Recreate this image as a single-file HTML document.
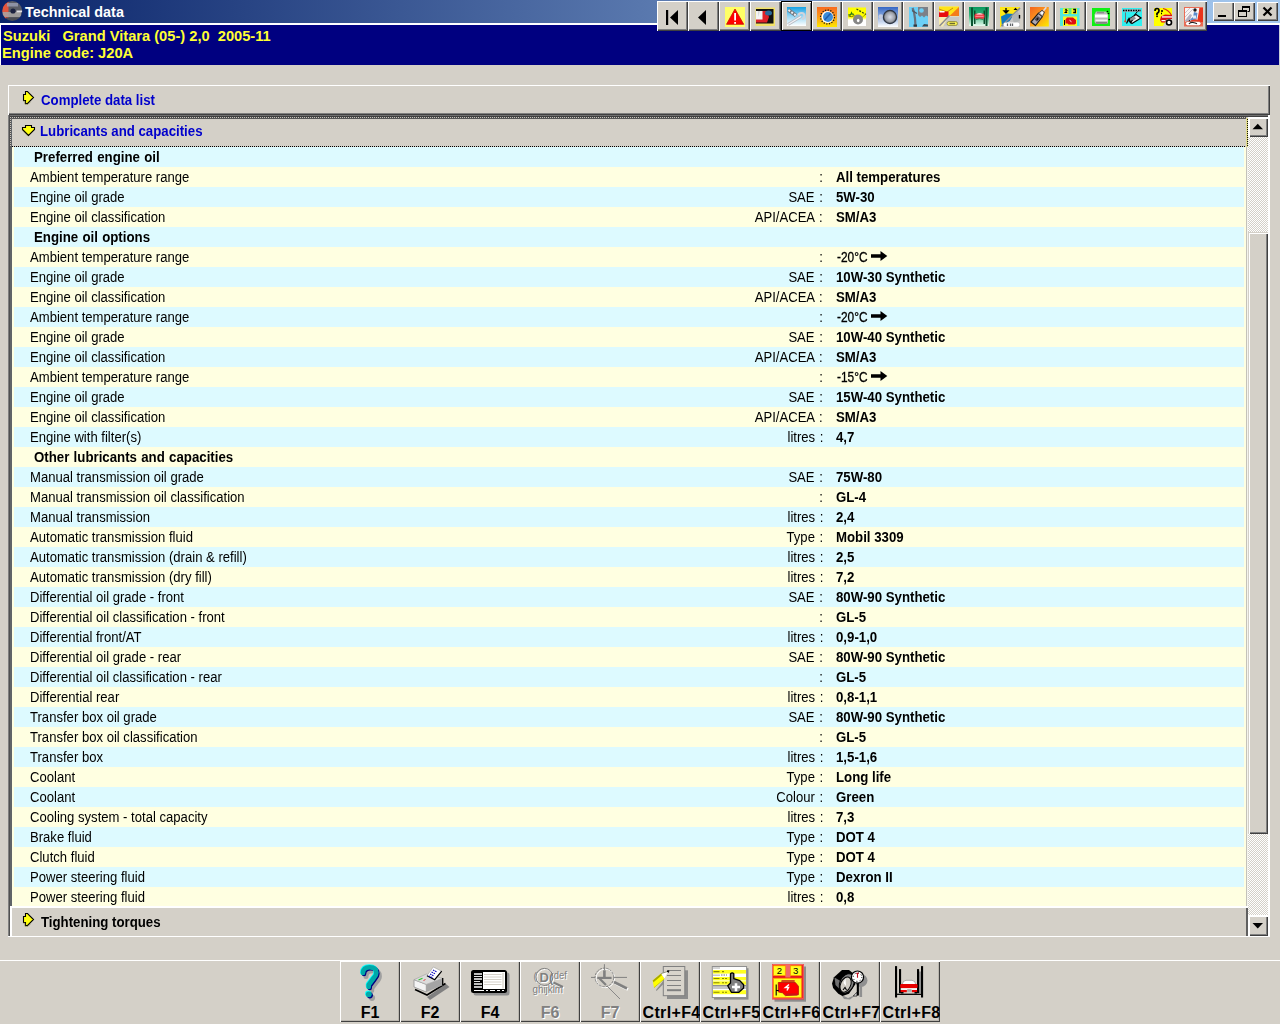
<!DOCTYPE html>
<html lang="en"><head><meta charset="utf-8"><title>Technical data</title>
<style>
*{box-sizing:border-box;margin:0;padding:0}
html,body{width:1280px;height:1024px;overflow:hidden}
body{position:relative;background:#d4d0c8;font-family:"Liberation Sans",sans-serif;font-size:13px;color:#000}
.abs{position:absolute}
#tbar{left:0;top:0;width:1280px;height:23px;background:linear-gradient(90deg,#0a246a 0%,#a6caf0 100%)}
#ttl{left:25px;top:2px;color:#fff;font-weight:bold;font-size:14.4px;line-height:20px;white-space:nowrap}
#wline{left:0;top:23px;width:1280px;height:2px;background:#fff}
#navy{left:1px;top:25px;width:1278px;height:40px;background:#000080}
#nleft{left:0;top:25px;width:1px;height:40px;background:#fff}
#nright{left:1279px;top:25px;width:1px;height:40px;background:#c8ccd8}
.yl{color:#ffff33;font-weight:bold;font-size:14.67px;line-height:18px;white-space:nowrap;left:3px}
.tb{top:1px;height:30px;background:#d4d0c8;box-shadow:inset 1px 1px 0 #fff,inset -1px -1px 0 #404040,inset -2px -2px 0 #808080}
.tb.dn{box-shadow:inset 0 0 0 1px #000,inset 2px 2px 0 #fff,inset -2px -2px 0 #808080}
.tb svg{position:absolute;left:0;top:0}
.wb svg{position:absolute;left:0;top:0}
.wb{top:2px;height:19px;width:21px;background:#d4d0c8;box-shadow:inset 1px 1px 0 #fff,inset -1px -1px 0 #404040,inset -2px -2px 0 #808080}
.sb{background:#d4d0c8;box-shadow:inset 1px 1px 0 #fff,inset 2px 2px 0 #fff,inset -1px -1px 0 #404040,inset -2px -2px 0 #808080}
.raised{background:#d4d0c8;box-shadow:inset 1px 1px 0 #fff,inset 2px 2px 0 #fff,inset -1px -1px 0 #404040,inset -2px -2px 0 #808080}
.hd{font-weight:bold;font-size:14px;line-height:18px;white-space:nowrap;transform:scaleX(.945);transform-origin:0 50%}
.blue{color:#0000cc}
#list{left:12px;top:147px;width:1235px;height:760px;background:#ffffe1;overflow:hidden}
.row{position:relative;height:20px;line-height:20px;margin:0 3px 0 2px;white-space:nowrap}
.row.b{background:#ddfaff}
.row.y{background:#ffffe1}
.row span{position:absolute;top:0;font-size:14px;transform:scaleX(.935);transform-origin:0 50%}
.row .h{left:20px;font-weight:bold;transform:scaleX(.947);word-spacing:.6px}
.l{left:16px}
.row .m{right:421px;text-align:right;transform-origin:100% 50%;word-spacing:1px}
.row .v{left:822px;font-weight:bold;transform:scaleX(.945)}
.row .v.t{left:823px;font-weight:normal;transform:scaleX(.85);-webkit-text-stroke:.3px #000}
.row .ars{left:857px;top:4px;transform:none;line-height:0;font-size:0}
.ar{display:block}
.bb{top:961px;width:60px;height:61px;background:#d4d0c8;box-shadow:inset 1px 1px 0 #fff,inset -1px -1px 0 #404040,inset -2px -2px 0 #bab6ae}
.bb b{position:absolute;left:0;width:60px;text-align:center;top:42px;font-size:16px;line-height:20px;white-space:nowrap}
.bb b.c{text-align:left;left:2.500px;letter-spacing:.36px;overflow:hidden;width:57px}
.bb.dis b{color:#808080;text-shadow:1px 1px 0 #fff}
.bb svg{position:absolute;left:0;top:0}
</style></head><body>
<div id="tbar" class="abs"></div>
<div class="abs" style="left:1.500px;top:.600px"><svg width="24" height="23" viewBox="0 0 24 23"><defs><clipPath id="apc"><circle cx="10.200" cy="10" r="10"/></clipPath><filter id="apb" x="-10%" y="-10%" width="120%" height="120%"><feGaussianBlur stdDeviation=".55"/></filter></defs><g clip-path="url(#apc)" filter="url(#apb)"><rect width="24" height="23" fill="#5a5d66"/><rect x="0" y="0" width="6.500" height="23" fill="#e2553e"/><rect x="5" y="2" width="11" height="3.500" fill="#9aa0b4" opacity=".8"/><rect x="0" y="11" width="19" height="5" fill="#a9a6a3" opacity=".85"/><circle cx="11" cy="10" r="2.600" fill="#1c2440"/><rect x="14.500" y="9.500" width="7" height="1.800" fill="#e0e0e4"/><rect x="4" y="16.500" width="15" height="5" fill="#4a4c52"/></g></svg></div>
<div id="ttl" class="abs">Technical data</div>
<div id="wline" class="abs"></div>
<div id="navy" class="abs"></div><div id="nleft" class="abs"></div><div id="nright" class="abs"></div>
<div class="abs yl" style="top:27px">Suzuki&nbsp;&nbsp; Grand Vitara (05-) 2,0&nbsp; 2005-11</div>
<div class="abs yl" style="top:44px;left:2px">Engine code: J20A</div>

<!-- top toolbar -->
<div class="abs tb" style="left:657px;width:31px"><svg width="31" height="30"><rect x="9" y="9" width="2.200" height="15" fill="#000"/><path d="M13 16.500L21 9v15z" fill="#000"/></svg></div>
<div class="abs tb" style="left:688px;width:31px"><svg width="31" height="30"><path d="M10 16.500L18 9v15z" fill="#000"/></svg></div>
<div class="abs tb" style="left:719px;width:31px"><svg width="31" height="30"><rect x="6" y="6" width="20" height="20" fill="#ffff66"/><path d="M16 8L24.700 23.300H7.500z" fill="#ff0000" stroke="#c81400" stroke-width=".8"/><rect x="15.200" y="12" width="1.800" height="7.500" fill="#fff"/><rect x="15.200" y="21" width="1.800" height="1.800" fill="#fff"/></svg></div>
<div class="abs tb" style="left:750px;width:31px"><svg width="31" height="30"><rect x="5.500" y="6.500" width="19.500" height="18.500" fill="#f2e268"/><rect x="6" y="8" width="17.500" height="14.500" fill="#111"/><path d="M6 10h11l2 6-2 5.500H6z" fill="#e02028"/><rect x="6" y="10" width="6.500" height="8.500" fill="#f4f4f4"/><path d="M8 10h2l-2 6z" fill="#d8d8d8"/><ellipse cx="18.500" cy="12" rx="3.500" ry="2.500" fill="#2a6a9a"/></svg></div>
<div class="abs tb dn" style="left:781px;width:31px"><svg width="31" height="30"><defs><linearGradient id="g5" x1="0" y1="0" x2="0" y2="1"><stop offset="0" stop-color="#14a0e4"/><stop offset=".5" stop-color="#9cd8f4"/><stop offset="1" stop-color="#ffffff"/></linearGradient></defs><rect x="6" y="6" width="19" height="19" fill="url(#g5)"/><path d="M7 23.500L20 15.500" stroke="#b8bcc4" stroke-width="3"/><path d="M7 23.500L20 15.500" stroke="#f4f4f8" stroke-width="1.200"/><path d="M17.500 14.500a3 3 0 1 1 3.500 3.500" fill="none" stroke="#d0d4dc" stroke-width="2"/><path d="M7.500 9L15 14.500" stroke="#707880" stroke-width="3.600"/><path d="M7.500 9L15 14.500" stroke="#f0f0f4" stroke-width="2" stroke-dasharray="2 1.500"/></svg></div>
<div class="abs tb" style="left:812px;width:30px"><svg width="31" height="30"><defs><linearGradient id="g6" x1="0" y1="0" x2="0" y2="1"><stop offset="0" stop-color="#f86a20"/><stop offset=".5" stop-color="#fc9c18"/><stop offset="1" stop-color="#ffe800"/></linearGradient></defs><rect x="5" y="6" width="20" height="20" fill="url(#g6)"/><circle cx="15.500" cy="16" r="6.900" fill="none" stroke="#181818" stroke-width="1.300" stroke-dasharray="1.300 1.400"/><circle cx="15.500" cy="16" r="6" fill="#fff"/><circle cx="16" cy="16" r="5" fill="#3c8cd8"/><path d="M12.500 19l6-6.500" stroke="#1c5cb0" stroke-width="1.500"/></svg></div>
<div class="abs tb" style="left:842px;width:31px"><svg width="31" height="30"><defs><linearGradient id="g7" x1="0" y1="0" x2="0" y2="1"><stop offset="0" stop-color="#ffff00"/><stop offset=".52" stop-color="#ffff00"/><stop offset=".68" stop-color="#ffffff"/><stop offset="1" stop-color="#ffffff"/></linearGradient></defs><rect x="6" y="6.500" width="18" height="18.500" fill="url(#g7)"/><path d="M6.500 13.500q2 1.500 3-1.500 1 2 2.500 1" fill="none" stroke="#2c7c10" stroke-width="1.300"/><path d="M6.500 15q3 1.500 6-.5" fill="none" stroke="#707000" stroke-width="1"/><path d="M14.500 8l9.500 5.500" stroke="#3c4c10" stroke-width="1.300" stroke-dasharray="2 1.200"/><path d="M23.500 13.500l-3.500 3" stroke="#707000" stroke-width="1" stroke-dasharray="1.500 1"/><circle cx="16" cy="18.500" r="5" fill="#868686"/><ellipse cx="16.200" cy="19.500" rx="1.300" ry="1.800" fill="#fff"/></svg></div>
<div class="abs tb" style="left:873px;width:30px"><svg width="31" height="30"><defs><linearGradient id="g8" x1="0" y1="0" x2="0" y2="1"><stop offset="0" stop-color="#3466c4"/><stop offset=".55" stop-color="#9cb8e4"/><stop offset="1" stop-color="#ffffff"/></linearGradient><radialGradient id="g8b"><stop offset="0" stop-color="#d8dce8"/><stop offset=".7" stop-color="#9ca0a8"/><stop offset="1" stop-color="#585c60"/></radialGradient></defs><rect x="5" y="6" width="20" height="20" fill="url(#g8)"/><circle cx="7.800" cy="15.500" r="2.200" fill="#c4cce0"/><circle cx="8" cy="19" r="1.800" fill="#c8d0e4"/><circle cx="17" cy="16" r="6.600" fill="url(#g8b)" stroke="#2c3444" stroke-width="1.200"/></svg></div>
<div class="abs tb" style="left:903px;width:31px"><svg width="31" height="30"><rect x="6" y="6" width="19" height="20" fill="#6ccff6"/><path d="M15 6h10v9.500l-2-1-2 2-2-2-2 1.500-2-2z" fill="#7c8088"/><circle cx="18.500" cy="9.500" r="2.300" fill="#6ccff6"/><path d="M9.500 7l1.500 4 1 6.500 .5 8" fill="none" stroke="#68707c" stroke-width="2.200"/><path d="M9 9.500l5 3" stroke="#505860" stroke-width="1.300"/><rect x="10.500" y="23.500" width="3.500" height="2.200" fill="#303840"/><path d="M19 25.500l2-2.500 4 .5v2z" fill="#404850"/></svg></div>
<div class="abs tb" style="left:934px;width:30px"><svg width="31" height="30"><rect x="5" y="5.500" width="20" height="20" fill="#f8ecb0"/><path d="M5 5.500h20v9H5z" fill="#ffe418"/><path d="M25 6v9h-9.500z" fill="#f47c18"/><path d="M5 8l8 3 6-4" fill="none" stroke="#c88c10" stroke-width="1"/><rect x="5" y="10.500" width="9.500" height="5.500" fill="#e80c10"/><rect x="5.500" y="10" width="5" height="1.500" fill="#fff"/><path d="M14.500 15.500H25v10H9z" fill="#c8c8c4"/><path d="M5.500 25L15.500 14.500" stroke="#8c8c90" stroke-width="1.500"/><rect x="13" y="20.500" width="10.500" height="4" rx="2" fill="#f4ec50" stroke="#8c8838" stroke-width=".8"/><rect x="15.500" y="21.800" width="5.500" height="1.400" fill="#6c6c30"/></svg></div>
<div class="abs tb" style="left:964px;width:31px"><svg width="31" height="30"><defs><linearGradient id="g11" x1="0" y1="0" x2="0" y2="1"><stop offset="0" stop-color="#08985c"/><stop offset=".45" stop-color="#38b47c"/><stop offset="1" stop-color="#e8fcf0"/></linearGradient></defs><rect x="5" y="6" width="20" height="19" fill="url(#g11)"/><rect x="7" y="6.500" width="2" height="18.500" fill="#085430"/><rect x="21.500" y="6.500" width="2" height="18.500" fill="#085430"/><rect x="10" y="9.500" width="1.500" height="13.500" fill="#0c4c2c"/><rect x="19.500" y="9.500" width="1.500" height="13.500" fill="#0c4c2c"/><rect x="10.500" y="12.500" width="10" height="5.500" rx="2" fill="#e83c44"/><path d="M12 13.500q3.500-2.500 7 0z" fill="#fff"/><rect x="11.500" y="14.800" width="8" height="1.200" fill="#f88"/><path d="M12 18.500q3.500-1.500 7 0" stroke="#2c8c54" stroke-width="1" fill="none"/></svg></div>
<div class="abs tb" style="left:995px;width:30px"><svg width="31" height="30"><rect x="5" y="6" width="20" height="20" fill="#ffe818"/><path d="M25 7v19H5.500z" fill="#c4c4c4"/><path d="M6 15.500l6-3 7 .5-4 6.500-8 6z" fill="#1078c0"/><path d="M6.500 25L25 7" stroke="#888c90" stroke-width="1.600"/><path d="M17 15l5-4.500 3 3v6l-6 3z" fill="#b0b4b4"/><path d="M24.500 14v3.500" stroke="#000" stroke-width="1.400"/><rect x="8.500" y="21.500" width="16" height="4.200" rx="2" fill="#fff"/><path d="M12.500 22.500v2.500M15.500 22.500v2.500M17.500 22.500v2.500" stroke="#606468" stroke-width="1.300"/><path d="M11 7v3.500M9 10h4l-2 2z" stroke="#000" stroke-width="1.300" fill="#000"/><path d="M18.500 9h4l-2-2.200z" fill="#000"/></svg></div>
<div class="abs tb" style="left:1025px;width:30px"><svg width="31" height="30"><defs><linearGradient id="g13" x1="0" y1="0" x2=".9" y2="1"><stop offset="0" stop-color="#f4641c"/><stop offset=".5" stop-color="#fc9820"/><stop offset="1" stop-color="#ffe400"/></linearGradient></defs><rect x="5" y="6" width="18.800" height="19.500" fill="url(#g13)"/><path d="M6 21l7.500-8.800 4 3.300L10.500 24.500z" fill="#aca8b4" stroke="#201c18" stroke-width="1.200" stroke-linejoin="round"/><path d="M13.500 12.200l3.500-3 2.500 1.800-2 4.500z" fill="#c8c4cc" stroke="#383430" stroke-width=".8"/><path d="M18.500 9.800l2.800-3.600" stroke="#e0dce0" stroke-width="1.600"/><rect x="16.200" y="11" width="1.800" height="2.200" fill="#fff"/><path d="M9.500 18.500l3.200-3.600 2.500 2-3.200 3.800z" fill="#504c58"/><rect x="11.800" y="17" width="1.400" height="2" fill="#181818"/></svg></div>
<div class="abs tb" style="left:1055px;width:31px"><svg width="31" height="30"><rect x="5" y="7" width="19.500" height="18" fill="#50e8dc"/><rect x="8" y="7" width="14" height="6" fill="#58e880"/><rect x="8" y="7.500" width="5.500" height="5.500" fill="#f8f820"/><rect x="16.500" y="7.500" width="5.500" height="5.500" fill="#f8f820"/><path d="M10 9.500l1-1.200 1 1.200-1.800 2h2" fill="none" stroke="#000" stroke-width="1.100"/><path d="M18.200 8.500h2.200v3h-2.200" fill="none" stroke="#000" stroke-width="1.300"/><rect x="8" y="15.500" width="14" height="9.500" fill="#f8f820"/><path d="M10.500 18.500l1.500-2h6l3 2.500v3.500l-1.500 1h-6l-1-1h-2z" fill="#e00c10"/><path d="M9.500 19v5" stroke="#000" stroke-width="1"/><path d="M14.500 19.200l2 1.600" stroke="#fff" stroke-width="1"/></svg></div>
<div class="abs tb" style="left:1086px;width:31px"><svg width="31" height="30"><rect x="6" y="7" width="18" height="18" fill="#10f014"/><path d="M10 10.500h10l2 3v8l-1 1.500H10l-1.500-2v-7.500z" fill="#b8b8b8"/><rect x="9" y="13.500" width="12.500" height="3" fill="#fff"/><rect x="9.500" y="18.500" width="12" height="2" fill="#f0f0f0"/><rect x="10" y="20.800" width="11" height="2" fill="#808480"/><rect x="11" y="11" width="7" height="1.300" fill="#8c8c8c"/><circle cx="21.500" cy="10.500" r=".8" fill="#000"/><circle cx="22.500" cy="12.500" r=".8" fill="#000"/><circle cx="23.200" cy="18.500" r=".8" fill="#000"/></svg></div>
<div class="abs tb" style="left:1117px;width:31px"><svg width="31" height="30"><rect x="5" y="7" width="20" height="18" fill="#30f0f0"/><rect x="6" y="8" width="18" height="3" fill="#8cb8c0"/><path d="M6 9.500h18" stroke="#000" stroke-width="1.500" stroke-dasharray="1.500 1"/><path d="M11 19l8-5.500 5 3.500-9 5.500z" fill="#f0f0f0" stroke="#000" stroke-width="1.200"/><path d="M11 19l5.500-3.800 2.500 2-5 4z" fill="#8c9094"/><path d="M8.500 11.500v9" stroke="#707478" stroke-width="1"/><path d="M7 21l1.500-3.500 1 4z" fill="#e04830"/><path d="M9.500 22.500l2.500-5 1.500 4 2-2.500" fill="none" stroke="#000" stroke-width="1.200"/><path d="M20.500 10.500l-3 3.500" stroke="#000" stroke-width="1"/></svg></div>
<div class="abs tb" style="left:1148px;width:30px"><svg width="31" height="30"><path d="M6 7h18v9l-6 3-3 6H6z" fill="#ffff00"/><path d="M7 10q0-2.500 2-2.500t2 2.200q0 1.600-2 2.800v1.500" fill="none" stroke="#000" stroke-width="1.700"/><rect x="8.200" y="14.500" width="1.700" height="1.600" fill="#000"/><path d="M13 10h2M13 12.500h1" stroke="#000" stroke-width="1.500"/><path d="M15 7.500q6 1.500 8.500 7" fill="none" stroke="#d83010" stroke-width="1.200"/><path d="M13 15.500l4-2 7 .5v4h-5l-2 3.500h-3.500l-1.500-2.500z" fill="#d81018"/><rect x="14" y="15.300" width="10" height="1.300" fill="#fff"/><rect x="13.500" y="19" width="4" height="1.200" fill="#fff"/><circle cx="21" cy="21.500" r="2.500" fill="#fff" stroke="#000" stroke-width="1.600"/></svg></div>
<div class="abs tb" style="left:1178px;width:29px"><svg width="31" height="30"><rect x="6" y="6" width="19" height="19.500" fill="#ec6c54"/><rect x="7" y="7" width="14.500" height="13.500" fill="#f8f4f4"/><path d="M21.500 7h3.500v14h-6z" fill="#e8341c"/><path d="M7 12l5-5M7 16l8-8M7 20l5-6" stroke="#c8c4cc" stroke-width="1"/><path d="M7 20l5-7 2 1-3 7z" fill="#b4b0c0"/><circle cx="17" cy="9" r="1.700" fill="#181818"/><path d="M16 11l3.500 1-1 6-4.500 2-2-1.500 3-2.500z" fill="#5c8ccc"/><rect x="15" y="14.500" width="3" height="3" fill="#dcecf8"/><path d="M11 19.500l2 1.500" stroke="#000" stroke-width="1.500"/><path d="M13 20l5-1 3 1.500" stroke="#e03c28" stroke-width="1.500" fill="none"/><rect x="7.500" y="20.500" width="15.500" height="4.200" rx="2.100" fill="#fff" stroke="#c84028" stroke-width=".6"/><path d="M11 23q1.500-2 4-1.500t4 1.200" fill="none" stroke="#202020" stroke-width="1.200"/></svg></div>

<!-- window buttons -->
<div class="abs wb" style="left:1213px"><svg width="21" height="19"><rect x="5" y="13" width="8" height="2" fill="#000"/></svg></div>
<div class="abs wb" style="left:1234px"><svg width="21" height="19"><path d="M8.500 8V4.500h7v5H13.500" fill="none" stroke="#000" stroke-width="1"/><rect x="8" y="4" width="8" height="2" fill="#000"/><rect x="4.500" y="8.500" width="8" height="6" fill="none" stroke="#000" stroke-width="1"/><rect x="4" y="8" width="9" height="2" fill="#000"/></svg></div>
<div class="abs wb" style="left:1257px"><svg width="21" height="19"><path d="M6.500 5.500l8 8M14.500 5.500l-8 8" stroke="#000" stroke-width="2.200" fill="none"/></svg></div>

<!-- Complete data list -->
<div class="abs" style="left:8px;top:85px;width:1262px;height:30px;background:#d4d0c8;box-shadow:inset 1px 1px 0 #fff,inset -1px -1px 0 #404040,inset -2px -2px 0 #808080"></div>
<div class="abs" style="left:22px;top:90px"><svg width="14" height="16" viewBox="0 0 14 16"><path d="M1.500 4.500h2v-3h2l6 6-6 6h-2v-3h-2z" fill="#ffff10" stroke="#000" stroke-width="1.100" stroke-linejoin="miter"/><path d="M1 11h2v3.300h3l2.500-2.500" fill="none" stroke="#6c6c20" stroke-width=".5"/></svg></div>
<div class="abs hd blue" style="left:41px;top:91px">Complete data list</div>

<!-- Lubricants frame -->
<div class="abs" id="frame" style="left:8px;top:115px;width:1262px;height:822px;background:#d4d0c8"></div>
<div class="abs" style="left:8px;top:115px;width:1260px;height:1px;background:#707070"></div>
<div class="abs" style="left:8px;top:116px;width:1260px;height:1px;background:#404040"></div>
<div class="abs" style="left:10px;top:118px;width:1238px;height:1px;background:#585858"></div>
<div class="abs" style="left:8px;top:115px;width:1px;height:821px;background:#808080"></div>
<div class="abs" style="left:9px;top:115px;width:1px;height:821px;background:#505050"></div>
<div class="abs" style="left:10px;top:117px;width:2px;height:789px;background:#606468"></div>
<div class="abs" style="left:1268px;top:115px;width:2px;height:822px;background:#fff"></div>
<div class="abs" style="left:8px;top:936px;width:1262px;height:1px;background:#fff"></div>
<div class="abs" style="left:10px;top:117px;width:1237px;height:1px;background:repeating-linear-gradient(90deg,#c8c4bc 0 1px,#505050 1px 2px)"></div>
<div class="abs" style="left:10px;top:117px;width:1px;height:30px;background:repeating-linear-gradient(180deg,#c8c4bc 0 1px,#505050 1px 2px)"></div>
<div class="abs" style="left:12px;top:146px;width:1235px;height:1px;background:repeating-linear-gradient(90deg,#000 0 1px,#d4d0c8 1px 2px)"></div>
<div class="abs" style="left:1246px;top:118px;width:1px;height:29px;background:#e4dc90"></div>
<div class="abs" style="left:1247px;top:118px;width:1px;height:29px;background:repeating-linear-gradient(180deg,#d8d490 0 1px,#181800 1px 2px)"></div>
<div class="abs" style="left:21px;top:124px"><svg width="16" height="14" viewBox="0 0 16 14"><path d="M4.500 1.500h6v2h3v2l-6 6-6-6v-2h3z" fill="#ffff10" stroke="#000" stroke-width="1.100" stroke-linejoin="miter"/><path d="M1 6l6 6.200" fill="none" stroke="#6c6c20" stroke-width=".5"/></svg></div>
<div class="abs hd blue" style="left:40px;top:122px">Lubricants and capacities</div>

<div class="abs" id="list">
<div class="row b"><span class="h">Preferred engine oil</span></div>
<div class="row y"><span class="l">Ambient temperature range</span><span class="m">:</span><span class="v">All temperatures</span></div>
<div class="row b"><span class="l">Engine oil grade</span><span class="m">SAE :</span><span class="v">5W-30</span></div>
<div class="row y"><span class="l">Engine oil classification</span><span class="m">API/ACEA :</span><span class="v">SM/A3</span></div>
<div class="row b"><span class="h">Engine oil options</span></div>
<div class="row y"><span class="l">Ambient temperature range</span><span class="m">:</span><span class="v t">-20°C</span><span class="ars"><svg class="ar" width="17" height="10" viewBox="0 0 17 10"><path d="M0 3.200h9.500V0L16.300 5 9.500 10V6.800H0z" fill="#000"/></svg></span></div>
<div class="row b"><span class="l">Engine oil grade</span><span class="m">SAE :</span><span class="v">10W-30 Synthetic</span></div>
<div class="row y"><span class="l">Engine oil classification</span><span class="m">API/ACEA :</span><span class="v">SM/A3</span></div>
<div class="row b"><span class="l">Ambient temperature range</span><span class="m">:</span><span class="v t">-20°C</span><span class="ars"><svg class="ar" width="17" height="10" viewBox="0 0 17 10"><path d="M0 3.200h9.500V0L16.300 5 9.500 10V6.800H0z" fill="#000"/></svg></span></div>
<div class="row y"><span class="l">Engine oil grade</span><span class="m">SAE :</span><span class="v">10W-40 Synthetic</span></div>
<div class="row b"><span class="l">Engine oil classification</span><span class="m">API/ACEA :</span><span class="v">SM/A3</span></div>
<div class="row y"><span class="l">Ambient temperature range</span><span class="m">:</span><span class="v t">-15°C</span><span class="ars"><svg class="ar" width="17" height="10" viewBox="0 0 17 10"><path d="M0 3.200h9.500V0L16.300 5 9.500 10V6.800H0z" fill="#000"/></svg></span></div>
<div class="row b"><span class="l">Engine oil grade</span><span class="m">SAE :</span><span class="v">15W-40 Synthetic</span></div>
<div class="row y"><span class="l">Engine oil classification</span><span class="m">API/ACEA :</span><span class="v">SM/A3</span></div>
<div class="row b"><span class="l">Engine with filter(s)</span><span class="m">litres :</span><span class="v">4,7</span></div>
<div class="row y"><span class="h">Other lubricants and capacities</span></div>
<div class="row b"><span class="l">Manual transmission oil grade</span><span class="m">SAE :</span><span class="v">75W-80</span></div>
<div class="row y"><span class="l">Manual transmission oil classification</span><span class="m">:</span><span class="v">GL-4</span></div>
<div class="row b"><span class="l">Manual transmission</span><span class="m">litres :</span><span class="v">2,4</span></div>
<div class="row y"><span class="l">Automatic transmission fluid</span><span class="m">Type :</span><span class="v">Mobil 3309</span></div>
<div class="row b"><span class="l">Automatic transmission (drain &amp; refill)</span><span class="m">litres :</span><span class="v">2,5</span></div>
<div class="row y"><span class="l">Automatic transmission (dry fill)</span><span class="m">litres :</span><span class="v">7,2</span></div>
<div class="row b"><span class="l">Differential oil grade - front</span><span class="m">SAE :</span><span class="v">80W-90 Synthetic</span></div>
<div class="row y"><span class="l">Differential oil classification - front</span><span class="m">:</span><span class="v">GL-5</span></div>
<div class="row b"><span class="l">Differential front/AT</span><span class="m">litres :</span><span class="v">0,9-1,0</span></div>
<div class="row y"><span class="l">Differential oil grade - rear</span><span class="m">SAE :</span><span class="v">80W-90 Synthetic</span></div>
<div class="row b"><span class="l">Differential oil classification - rear</span><span class="m">:</span><span class="v">GL-5</span></div>
<div class="row y"><span class="l">Differential rear</span><span class="m">litres :</span><span class="v">0,8-1,1</span></div>
<div class="row b"><span class="l">Transfer box oil grade</span><span class="m">SAE :</span><span class="v">80W-90 Synthetic</span></div>
<div class="row y"><span class="l">Transfer box oil classification</span><span class="m">:</span><span class="v">GL-5</span></div>
<div class="row b"><span class="l">Transfer box</span><span class="m">litres :</span><span class="v">1,5-1,6</span></div>
<div class="row y"><span class="l">Coolant</span><span class="m">Type :</span><span class="v">Long life</span></div>
<div class="row b"><span class="l">Coolant</span><span class="m">Colour :</span><span class="v">Green</span></div>
<div class="row y"><span class="l">Cooling system - total capacity</span><span class="m">litres :</span><span class="v">7,3</span></div>
<div class="row b"><span class="l">Brake fluid</span><span class="m">Type :</span><span class="v">DOT 4</span></div>
<div class="row y"><span class="l">Clutch fluid</span><span class="m">Type :</span><span class="v">DOT 4</span></div>
<div class="row b"><span class="l">Power steering fluid</span><span class="m">Type :</span><span class="v">Dexron II</span></div>
<div class="row y"><span class="l">Power steering fluid</span><span class="m">litres :</span><span class="v">0,8</span></div>
</div>
<div class="abs" style="left:1246px;top:147px;width:1px;height:759px;background:#c4c2ba"></div><div class="abs" style="left:1247px;top:147px;width:1px;height:759px;background:#f4f4ec"></div>

<!-- Tightening torques -->
<div class="abs" style="left:10px;top:906px;width:1238px;height:30px;background:#d4d0c8;box-shadow:inset 2px 2px 0 #fff,inset -2px 0 0 #606060"></div>
<div class="abs" style="left:22px;top:912px"><svg width="14" height="16" viewBox="0 0 14 16"><path d="M1.500 4.500h2v-3h2l6 6-6 6h-2v-3h-2z" fill="#ffff10" stroke="#000" stroke-width="1.100" stroke-linejoin="miter"/><path d="M1 11h2v3.300h3l2.500-2.500" fill="none" stroke="#6c6c20" stroke-width=".5"/></svg></div>
<div class="abs hd" style="left:41px;top:913px">Tightening torques</div>

<!-- scrollbar -->
<div class="abs" style="left:1248px;top:117px;width:20px;height:819px;background-color:#ebe9e5;background-image:repeating-conic-gradient(#fff 0 25%,#d4d0c8 0 50%);background-size:2px 2px"></div>
<div class="abs sb" style="left:1248px;top:117px;width:20px;height:20px"><svg width="20" height="20" style="position:absolute;left:0;top:0"><path d="M4.500 12.200h10.500L9.750 6.700z" fill="#000"/></svg></div>
<div class="abs sb" style="left:1248px;top:232px;width:20px;height:602px;box-shadow:inset 1px 1px 0 #d4d0c8,inset 2px 2px 0 #fff,inset -1px -1px 0 #404040,inset -2px -2px 0 #808080"></div>
<div class="abs sb" style="left:1248px;top:915px;width:20px;height:21px"><svg width="20" height="20" style="position:absolute;left:0;top:0"><path d="M4.500 8h10.500L9.750 13.500z" fill="#000"/></svg></div>

<!-- bottom toolbar -->
<div class="abs" style="left:0;top:960px;width:1280px;height:1px;background:#fff"></div>
<div class="abs bb" style="left:340px"><svg width="60" height="61"><g fill="none" stroke-linecap="round" stroke-linejoin="round"><path id="qm" d="M23 12q0-5.800 6.700-5.800t6.700 5.500q0 2.800-3 5.800l-4.700 6.300v2.200" stroke="#a0a0a0" stroke-width="5" transform="translate(3,3.500)"/><circle cx="32" cy="36.800" r="3.100" fill="#a0a0a0"/><path d="M23 12q0-5.800 6.700-5.800t6.700 5.500q0 2.800-3 5.800l-4.700 6.300v2.200" stroke="#000080" stroke-width="4.600" transform="translate(1,1)"/><circle cx="29.800" cy="34.300" r="3.100" fill="#000080"/><path d="M23 12q0-5.800 6.700-5.800t6.700 5.500q0 2.800-3 5.800l-4.700 6.300v2.200" stroke="#00ffff" stroke-width="4.600" transform="translate(-.6,-.6)"/><circle cx="28.200" cy="32.700" r="3.100" fill="#00ffff"/><path d="M23 12q0-5.800 6.700-5.800t6.700 5.500q0 2.800-3 5.800l-4.700 6.300v2.200" stroke="#00a8a8" stroke-width="4.600"/><circle cx="28.800" cy="33.300" r="2.900" fill="#00a8a8"/></g></svg><b>F1</b></div>
<div class="abs bb" style="left:400px"><svg width="60" height="61"><path d="M27 36l19-13 3.500 3L30 39z" fill="#808080"/><path d="M15 28.500l12 5.500 18.500-11.500" fill="none" stroke="#000" stroke-width="1.600"/><path d="M14 18.700l12.300 4.700V31L14 26z" fill="#f4f4f4" stroke="#909090" stroke-width=".8"/><path d="M26.300 23.400l16.400-6.100v7L26.300 31z" fill="#a4a4a4"/><path d="M14 18.700L26.300 13l16.400 4.300-16.400 6.100z" fill="#dcdcdc" stroke="#a0a0a0" stroke-width=".6"/><path d="M42.700 17v7" stroke="#000" stroke-width="1.300"/><path d="M18.500 19l4-1.800" stroke="#30c030" stroke-width="1.200"/><path d="M23.500 19.500l2-1" stroke="#e04040" stroke-width="1"/><path d="M27 14.500L33.300 6l8.400 4.200-7 8.500z" fill="#fff" stroke="#a0a0a0" stroke-width=".6"/><path d="M41.700 10.200l-7 8.500L27 14.800" fill="none" stroke="#000" stroke-width="1.200"/><path d="M33 9l4 2M31.500 11l4 2M30 13l4 2M28.800 15l4 1.800" stroke="#1010c0" stroke-width="1.200" stroke-dasharray="1.600 .7"/></svg><b>F2</b></div>
<div class="abs bb" style="left:460px"><svg width="60" height="61"><rect x="13.500" y="11.500" width="36" height="23" rx="2.500" fill="#909090"/><rect x="11" y="9" width="36" height="23" rx="2.500" fill="#000"/><rect x="23" y="11" width="22" height="17" fill="#fff"/><path d="M24 13.500h17.500M24 16h17.500M24 18.500h17.500M24 21h17.500M24 23.500h17.500" stroke="#d4d0c8" stroke-width="1"/><rect x="42" y="12" width="2" height="15.500" fill="#e4e2dc"/><path d="M14 13.100h8M14 18h8M14 22.900h8M14 26h8" stroke="#fff" stroke-width="1.500"/><path d="M14 15.500h8M14 20.500h6" stroke="#fff" stroke-width=".9"/><path d="M14 29.500h10M26 29.500h2M30 29.500h5M37 29.500h3M42 29.500h2" stroke="#fff" stroke-width="1.100"/></svg><b>F4</b></div>
<div class="abs bb dis" style="left:520px"><svg width="60" height="61" font-family="Liberation Sans, sans-serif"><g transform="translate(1,1)" fill="#fff" stroke="#fff"><circle cx="24.400" cy="15.900" r="8.500" fill="none" stroke-width="1"/><path d="M33.500 21.500l9.500 4.500" stroke-width="2.200"/><text x="33.800" y="17.500" font-size="10.500" stroke="none" textLength="13" lengthAdjust="spacingAndGlyphs">def</text><text x="12.500" y="32" font-size="11.500" stroke="none" textLength="30.500" lengthAdjust="spacingAndGlyphs">ghijklm</text><text x="19.500" y="20.500" font-size="13" font-weight="bold" stroke="none">D(</text><text x="13.500" y="19" font-size="10" stroke="none">(</text></g><g fill="#808080" stroke="#808080"><circle cx="24.400" cy="15.900" r="8.500" fill="none" stroke-width="1"/><path d="M33.500 21.500l9.500 4.500" stroke-width="2.200"/><text x="33.800" y="17.500" font-size="10.500" stroke="none" textLength="13" lengthAdjust="spacingAndGlyphs">def</text><text x="12.500" y="32" font-size="11.500" stroke="none" textLength="30.500" lengthAdjust="spacingAndGlyphs">ghijklm</text><text x="19.500" y="20.500" font-size="13" font-weight="bold" stroke="none">D(</text><text x="13.500" y="19" font-size="10" stroke="none">(</text></g></svg><b>F6</b></div>
<div class="abs bb dis" style="left:580px"><svg width="60" height="61"><g transform="translate(1,1)" stroke="#fff" fill="none"><path d="M34 21l13 6.500" stroke-width="2.600"/><circle cx="24.400" cy="16.400" r="9.300" stroke-width="1"/></g><g stroke="#808080" fill="none"><circle cx="24.400" cy="16.400" r="9.300" stroke-width="1" stroke-dasharray="2.500 1"/><path d="M11 16.400h4M33.800 16.400H47M24.400 3.200v6" stroke-width="1"/><path d="M24.400 9.300v7.500" stroke-width="2.600"/><path d="M17.300 16.900h14.300" stroke-width="2.200"/><path d="M19.500 17.500l6.500 6.500" stroke-width="2.200"/><path d="M27 25l13 13" stroke-width=".9"/><path d="M34 21l13 6.500" stroke-width="2.600"/></g></svg><b>F7</b></div>
<div class="abs bb" style="left:640px"><svg width="60" height="61"><rect x="27" y="9.300" width="21" height="28.700" fill="#8c8c8c"/><rect x="23.300" y="5.500" width="21.500" height="29.200" fill="#d8d4cc" stroke="#808080" stroke-width="1"/><path d="M27 9.500h14M27 14.500h14M27 19.500h14M27 24.500h14" stroke="#808080" stroke-width="1"/><path d="M27 29.200h14" stroke="#808080" stroke-width="2"/><path d="M16 29l7.500-9.500v3.500L16.500 30z" fill="#8c8c8c"/><path d="M12.700 19.600l8.400-7 3.300 5.200L14 26.700z" fill="#ffff00"/><path d="M12.700 19.600l8.400-7 1 1.500-8.600 7.200z" fill="#a8a800"/><path d="M21.100 12.600l7-2.300-3.700 7.500z" fill="#fff"/><path d="M21.100 12.600l7-2.300" stroke="#808060" stroke-width=".8"/><path d="M27 10.200l2-.4-.6 1.600z" fill="#000" stroke="#000" stroke-width=".8"/><path d="M14 26.700l10.400-8.900" stroke="#c8c800" stroke-width=".8"/></svg><b class="c">Ctrl+F4</b></div>
<div class="abs bb" style="left:700px"><svg width="60" height="61"><rect x="14" y="7.200" width="34.500" height="31.400" fill="#8c8c8c"/><rect x="12.300" y="5.500" width="34.300" height="31" fill="#fff" stroke="#909090" stroke-width="1"/><rect x="13" y="9" width="33" height="3.600" fill="#ffff20"/><rect x="13" y="16" width="33" height="3.400" fill="#ffff20"/><rect x="13" y="20.300" width="33" height="3.400" fill="#ffff20"/><rect x="13" y="24" width="33" height="1.600" fill="#909090"/><rect x="13" y="26.500" width="33" height="1" fill="#909090"/><rect x="13" y="29.200" width="33" height="4" fill="#ffff20"/><path d="M13 7h7M13 14.300h7" stroke="#c8c8c8" stroke-width="1.400"/><path d="M13.500 10.600h6M22 10.600h2M13.500 17.500h6M22 17.500h2M25 17.500h2M13.500 21.800h6M22 21.800h2M25 21.800h2M13.500 31.300h6M22 31.300h2M25 31.300h2" stroke="#888800" stroke-width="1.100"/><path d="M21 14h6" stroke="#707070" stroke-width="1" stroke-dasharray="1.500 1"/><path d="M27.700 24.800l2.800-2.800V12.700q1.650-1.800 3.300 0v5l6 1.900 3.800 4.200v3.300l-4.700 4.200h-7.500z" fill="#808080" stroke="#000" stroke-width="1.300" stroke-linejoin="round"/><path d="M32 26h8M36 22.200v8" stroke="#fff" stroke-width="2.600"/></svg><b class="c">Ctrl+F5</b></div>
<div class="abs bb" style="left:760px"><svg width="60" height="61" font-family="Liberation Sans, sans-serif"><rect x="14.500" y="5.500" width="31.500" height="35.200" fill="#8c8c8c"/><rect x="12" y="3" width="31.800" height="35.400" fill="#e8181c"/><rect x="12.600" y="3.600" width="30.600" height="34.200" fill="none" stroke="#f87070" stroke-width=".8"/><rect x="25.300" y="3.500" width="5.200" height="13" fill="#f06868"/><rect x="13.600" y="4.800" width="11.700" height="9.700" fill="#ffff20" stroke="#ffa000" stroke-width=".8"/><rect x="30.500" y="4.800" width="10.800" height="9.700" fill="#ffff20" stroke="#ffa000" stroke-width=".8"/><rect x="13.600" y="17.300" width="27.700" height="19.200" fill="#ffff20" stroke="#ffa000" stroke-width=".8"/><text x="19.500" y="13" font-size="9.500" text-anchor="middle" fill="#000">2</text><text x="35.700" y="13" font-size="9.500" text-anchor="middle" fill="#000">3</text><path d="M21.600 19.200h13.100v1.500h-13.500z" fill="#c01018"/><path d="M18.300 21.500h17l3.100 3.700v8.500l-13.100.9-2.800-2.800-4.200-.9z" fill="#ff0000" stroke="#b00c10" stroke-width=".8"/><path d="M25.300 32.500h12v2h-11z" fill="#c81418"/><path d="M16.200 23.400v11.200M16.200 29.500h2.500" stroke="#000" stroke-width="1.100"/><path d="M29 23.500l-3.500 3h3l-1.500 3" fill="none" stroke="#fff" stroke-width="1.500"/></svg><b class="c">Ctrl+F6</b></div>
<div class="abs bb" style="left:820px"><svg width="60" height="61" font-family="Liberation Sans, sans-serif"><circle cx="41" cy="19.500" r="6.500" fill="#909090"/><rect x="39.500" y="22" width="2.600" height="14" fill="#909090"/><path d="M16 26l6 8 6 3 6-2.500 5-6.500-2 5-7 5.500-6-.5z" fill="#909090"/><path d="M12 22.400l2-6.100 8-7.200h7l3.800 3 2.400 11.300-6.200 9.350-6.500 2.350-4.200-2.350-5.200-5.650z" fill="#000"/><path d="M14.500 16.500l6 3.500 0 9-5-5z" fill="#707070"/><ellipse cx="26.800" cy="22.400" rx="7" ry="10.200" transform="rotate(24 26.800 22.400)" fill="#808080" stroke="#000" stroke-width="1"/><ellipse cx="25.600" cy="23.600" rx="5" ry="8" transform="rotate(24 25.600 23.600)" fill="#d0ccc4" stroke="#000" stroke-width="1"/><path d="M25.500 17l-2 5 2.500 3z" fill="#fff"/><path d="M23 29l2-2.500 1.500 2.500" fill="none" stroke="#000" stroke-width="1.100"/><path d="M33.300 35l3.700-3.700V35z" fill="#f4f4f4" stroke="#000" stroke-width=".7"/><rect x="36.800" y="22" width="2.100" height="12.500" fill="#000"/><circle cx="37.500" cy="16.100" r="6.100" fill="#fff" stroke="#000" stroke-width="1.200"/><circle cx="37.500" cy="16.100" r="4.300" fill="none" stroke="#000" stroke-width="1" stroke-dasharray="1 2.370"/><path d="M36 12.300h3M37.500 12.300v4.500" stroke="#c01020" stroke-width="1.100"/></svg><b class="c">Ctrl+F7</b></div>
<div class="abs bb" style="left:880px"><svg width="60" height="61"><rect x="39.100" y="10.500" width="1.900" height="21.500" fill="#909090"/><rect x="15" y="5.100" width="2.100" height="31.400" fill="#000"/><rect x="41" y="5.100" width="2.100" height="31.400" fill="#000"/><rect x="19" y="8.100" width="2.100" height="24" fill="#000"/><rect x="37" y="8.100" width="2.100" height="24" fill="#000"/><path d="M16 33.300h26" stroke="#000" stroke-width="1.300"/><path d="M22 23.800q1-4.500 4-4.500h6q3 0 4 4.500z" fill="#fff" stroke="#808080" stroke-width=".6"/><rect x="20.200" y="23" width="17.300" height="4.300" rx="1.200" fill="#e80000"/><rect x="20.600" y="27.300" width="16.400" height="1.500" fill="#fff"/><rect x="20.600" y="29" width="6.200" height="2.200" fill="#e80000"/><rect x="31.900" y="29" width="5.200" height="2.200" fill="#e80000"/><rect x="27.200" y="28.200" width="4.300" height="2.500" fill="#a8a8a8"/><rect x="21" y="31" width="2.500" height="1.500" fill="#000"/><rect x="34.500" y="31" width="2.500" height="1.500" fill="#000"/></svg><b class="c">Ctrl+F8</b></div>
</body></html>
